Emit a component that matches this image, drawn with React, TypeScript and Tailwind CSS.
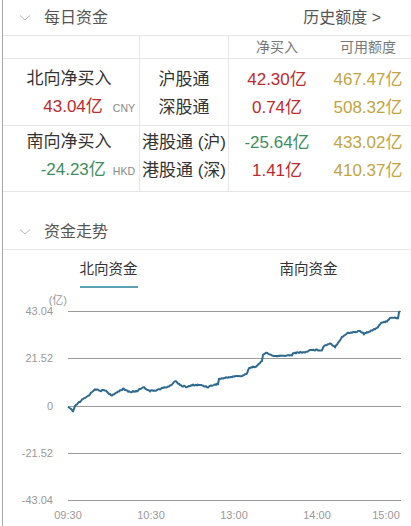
import React from 'react';

const FONT = { fontFamily: '"Liberation Sans", "Noto Sans CJK SC", sans-serif' };

// trend line key points, page coordinates
const KEY: [number, number][] = [
  [68, 408], [71, 410], [73, 413], [75, 407], [82, 401], [88, 397], [95, 390], [100, 392],
  [105, 391], [112, 397], [117, 393], [123, 390], [130, 393], [137, 392], [143, 388],
  [150, 392], [157, 391], [163, 389], [170, 387], [175, 382], [182, 387], [187, 388],
  [193, 386], [200, 386], [208, 388], [213, 386], [218, 385], [219, 380], [230, 378],
  [238, 377], [243, 377], [247, 374], [249, 369], [257, 367], [262, 362], [263, 355],
  [267, 354], [273, 357], [283, 357], [292, 356], [293, 354], [307, 353], [309, 351],
  [322, 351], [324, 347], [330, 344], [335, 348], [342, 338], [348, 334], [355, 333],
  [360, 332], [364, 335], [370, 332], [377, 329], [380, 325], [387, 322], [390, 319],
  [398, 319], [399, 313], [400, 312],
];

const OX = 3;
const OY = 290;

function buildLine(): string {
  const out: string[] = [];
  for (let i = 0; i < KEY.length - 1; i++) {
    const [x0, y0] = KEY[i];
    const [x1, y1] = KEY[i + 1];
    const steps = Math.max(1, Math.round(x1 - x0));
    for (let s = 0; s < steps; s++) {
      const t = s / steps;
      const x = x0 + (x1 - x0) * t;
      const n = Math.sin(x * 12.9898) * 43758.5453;
      const jitter = ((n - Math.floor(n)) - 0.5) * 1.2;
      const y = y0 + (y1 - y0) * t + jitter;
      out.push(`${(x - OX).toFixed(1)},${(y - OY).toFixed(1)}`);
    }
  }
  const [lx, ly] = KEY[KEY.length - 1];
  out.push(`${lx - OX},${ly - OY}`);
  return out.join(' ');
}

const Chevron = () => (
  <svg width="12" height="8" viewBox="0 0 12 8" className="shrink-0">
    <path d="M1 1.5 L6 6 L11 1.5" fill="none" stroke="#b8b8b8" strokeWidth="1" />
  </svg>
);

const SectionHeader = ({ title, right }: { title: string; right?: string }) => (
  <div className="flex items-center h-[36px] border-b border-[#e6e6e6] pl-[16px] pr-[30px]">
    <Chevron />
    <span className="ml-[13px] text-[16px] text-[#555]">{title}</span>
    {right && <span className="ml-auto text-[16px] text-[#555]">{right}</span>}
  </div>
);

const Cell = ({ children, className = '' }: { children: React.ReactNode; className?: string }) => (
  <div className={`flex flex-col justify-center ${className}`}>{children}</div>
);

const App: React.FC = () => {
  const grid = [22, 69, 117, 164, 211];
  const ylabels = ['43.04', '21.52', '0', '-21.52', '-43.04'];
  const xlabels: [string, number][] = [
    ['09:30', 68], ['10:30', 151], ['13:00', 234], ['14:00', 317], ['15:00', 386],
  ];

  return (
    <div className="w-[411px] h-[526px] bg-white pl-[2px] overflow-hidden" style={FONT}>
      <div className="h-full border-l border-[#a8a8a8] flex flex-col">
        <SectionHeader title="每日资金" right="历史额度 >" />

        <div className="grid grid-cols-[137px_89px_96px_1fr] text-[#333]">
          <div className="h-[23px] border-r border-b border-[#e6e6e6]" />
          <div className="h-[23px] border-r border-b border-[#e6e6e6]" />
          <div className="h-[23px] border-b border-[#e6e6e6] flex items-center justify-center text-[14px] text-[#777]">净买入</div>
          <div className="h-[23px] border-b border-[#e6e6e6] flex items-center justify-center text-[14px] text-[#777]">可用额度</div>

          <Cell className="h-[67px] border-r border-b border-[#e6e6e6] gap-[7px] pt-[2px]">
            <span className="text-[17px] leading-[21px] text-center pr-[4px]">北向净买入</span>
            <span className="flex items-baseline justify-end pr-[4px] leading-[21px]">
              <span className="text-[17px] text-[#bb2a2f]">43.04亿</span>
              <span className="ml-[10px] text-[10.5px] text-[#888]">CNY</span>
            </span>
          </Cell>
          <Cell className="h-[67px] border-r border-b border-[#e6e6e6] gap-[7px] pt-[2px] items-center">
            <span className="text-[17px] leading-[21px]">沪股通</span>
            <span className="text-[17px] leading-[21px]">深股通</span>
          </Cell>
          <Cell className="h-[67px] border-b border-[#e6e6e6] gap-[7px] pt-[2px] items-center text-[17px] text-[#bb2a2f]">
            <span className="leading-[21px]">42.30亿</span>
            <span className="leading-[21px]">0.74亿</span>
          </Cell>
          <Cell className="h-[67px] border-b border-[#e6e6e6] gap-[7px] pt-[2px] items-center text-[17px] text-[#c2a443]">
            <span className="leading-[21px]">467.47亿</span>
            <span className="leading-[21px]">508.32亿</span>
          </Cell>

          <Cell className="h-[66px] border-r border-b border-[#e6e6e6] gap-[7px] pb-[4px]">
            <span className="text-[17px] leading-[21px] text-center pr-[4px]">南向净买入</span>
            <span className="flex items-baseline justify-end pr-[4px] leading-[21px]">
              <span className="text-[17px] text-[#3f8c62]">-24.23亿</span>
              <span className="ml-[7px] text-[10.5px] text-[#888]">HKD</span>
            </span>
          </Cell>
          <Cell className="h-[66px] border-r border-b border-[#e6e6e6] gap-[7px] pb-[4px] items-center">
            <span className="text-[17px] leading-[21px]">港股通 (沪)</span>
            <span className="text-[17px] leading-[21px]">港股通 (深)</span>
          </Cell>
          <Cell className="h-[66px] border-b border-[#e6e6e6] gap-[7px] pb-[4px] items-center text-[17px]">
            <span className="leading-[21px] text-[#3f8c62]">-25.64亿</span>
            <span className="leading-[21px] text-[#bb2a2f]">1.41亿</span>
          </Cell>
          <Cell className="h-[66px] border-b border-[#e6e6e6] gap-[7px] pb-[4px] items-center text-[17px] text-[#c2a443]">
            <span className="leading-[21px]">433.02亿</span>
            <span className="leading-[21px]">410.37亿</span>
          </Cell>
        </div>

        <div className="h-[22px]" />
        <SectionHeader title="资金走势" />

        <div className="flex h-[39px] text-[14.5px] text-[#333]">
          <div className="w-[207px] flex justify-center pl-[4px]">
            <div className="flex flex-col items-center pt-[10px]">
              <span className="leading-[18px]">北向资金</span>
              <div className="mt-[8px] h-[2px] w-[58px] bg-[#5b9fb0]" />
            </div>
          </div>
          <div className="flex-1 flex justify-center pt-[10px] pr-[4px]">
            <span className="leading-[18px]">南向资金</span>
          </div>
        </div>

        <svg width="408" height="236" className="block" style={FONT}>
          <text x={67 - OX} y={15} fontSize="11" fill="#999" textAnchor="end">(亿)</text>
          {grid.map((y, i) => (
            <g key={y}>
              <line x1={68 - OX} x2={401 - OX} y1={y + 0.5} y2={y + 0.5} stroke="#9a9a9a" strokeWidth="1" />
              <text x={53 - OX} y={y + 4} fontSize="11" fill="#999" textAnchor="end">{ylabels[i]}</text>
            </g>
          ))}
          {xlabels.map(([t, x]) => (
            <text key={t} x={x - OX} y={230} fontSize="11" fill="#999" textAnchor="middle">{t}</text>
          ))}
          <polyline points={buildLine()} fill="none" stroke="#2e6a8f" strokeWidth="2" strokeLinejoin="round" />
        </svg>
      </div>
    </div>
  );
};

export default App;
